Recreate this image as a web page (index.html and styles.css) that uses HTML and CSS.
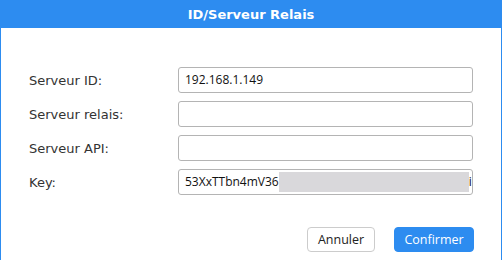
FILE: index.html
```html
<!DOCTYPE html>
<html>
<head>
<meta charset="utf-8">
<link rel="stylesheet" href="styles.css">
</head>
<body>
<div class="dialog">
  <div class="header">ID/Serveur Relais</div>
  <div class="form">
    <div class="row">
      <label class="label">Serveur ID:</label>
      <div class="input">192.168.1.149</div>
    </div>
    <div class="row">
      <label class="label">Serveur relais:</label>
      <div class="input"></div>
    </div>
    <div class="row">
      <label class="label">Serveur API:</label>
      <div class="input"></div>
    </div>
    <div class="row">
      <label class="label">Key:</label>
      <div class="input key"><span>53XxTTbn4mV36</span><span class="redact"></span><span>i</span></div>
    </div>
  </div>
  <div class="actions">
    <button class="btn cancel">Annuler</button>
    <button class="btn primary">Confirmer</button>
  </div>
</div>
</body>
</html>
```

FILE: styles.css
```css
html, body {
  margin: 0;
  padding: 0;
  background: #fff;
}
.dialog {
  width: 502px;
  height: 260px;
  box-sizing: border-box;
  border-left: 1px solid #2d8cf0;
  border-right: 1px solid #2d8cf0;
  display: flex;
  flex-direction: column;
}
.header {
  height: 28px;
  margin: 0 -1px;
  background: #2d8cf0;
  color: #fff;
  font-family: "DejaVu Sans", Verdana, sans-serif;
  font-weight: bold;
  font-size: 13px;
  line-height: 30px;
  text-align: center;
}
.form {
  padding: 39px 0 0 28px;
  display: flex;
  flex-direction: column;
  gap: 8px;
}
.row {
  display: flex;
  align-items: center;
  height: 26px;
}
.label {
  width: 149px;
  font-family: "DejaVu Sans", Verdana, sans-serif;
  font-size: 13px;
  color: #333;
}
.input {
  width: 295px;
  height: 26px;
  box-sizing: border-box;
  border: 1px solid #b4b4b4;
  border-radius: 3px;
  padding: 0 0 0 6px;
  font-family: "Open Sans", "Noto Sans", sans-serif;
  font-size: 12px;
  line-height: 24px;
  color: #111;
  display: flex;
  align-items: center;
  overflow: hidden;
  white-space: nowrap;
}
.redact {
  width: 190px;
  height: 20px;
  background: #d9d8db;
  flex: none;
}
.actions {
  display: flex;
  justify-content: flex-end;
  gap: 19px;
  padding: 32px 27px 0 0;
}
.btn {
  height: 25px;
  border-radius: 4px;
  font-family: "Open Sans", "Noto Sans", sans-serif;
  font-size: 12.5px;
  padding: 0;
  cursor: pointer;
}
.cancel {
  width: 68px;
  background: #fff;
  border: 1px solid #ccc;
  color: #222;
}
.primary {
  width: 80px;
  background: #2d8cf0;
  border: 1px solid #2d8cf0;
  color: #fff;
}
```
